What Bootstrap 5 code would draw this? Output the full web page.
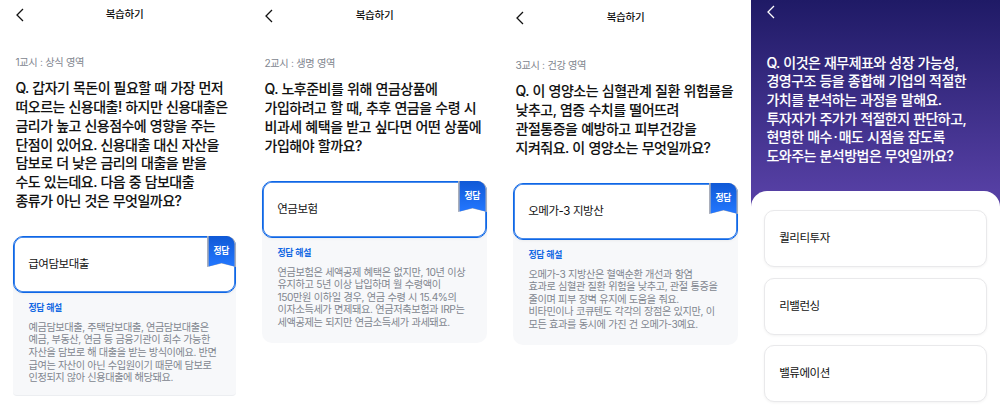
<!DOCTYPE html>
<html lang="ko">

<head>
    <meta charset="UTF-8">
    <meta name="viewport" content="width=device-width, initial-scale=1">
    <title>복습하기</title>
    <link href="https://cdn.jsdelivr.net/npm/bootstrap@5.3.0/dist/css/bootstrap.min.css" rel="stylesheet">
    <style>
        body {
            font-family: Inter, "Noto Sans CJK KR", sans-serif;
            color: #111;
            background: #fff;
            overflow: hidden;
        }

        .quiz-row {
            height: 409px;
        }

        .screen {
            padding: 3px 14px 0 13px;
            white-space: nowrap;
        }

        .screen-life {
            padding: 4px 13px 0 12px;
        }

        .screen-health {
            padding: 6px 12px 0 13px;
        }

        .screen-quiz {
            margin-left: 1px;
            padding: 0;
            background: linear-gradient(#1f1a66, #553fa3 190px);
            color: #fff;
        }

        .top-bar {
            display: grid;
            grid-template-columns: 20px 1fr 23px;
            align-items: center;
            height: 24px;
            padding-left: 3px;
            font-size: 10.6px;
            font-weight: 500;
            letter-spacing: -.35px;
            text-align: center;
        }

        .top-bar svg {
            display: block;
            width: 8px;
            height: 14px;
        }

        .area-name {
            margin: 27px 0 0 2.5px;
            line-height: 16px;
            font-size: 10.2px;
            letter-spacing: -.37px;
            word-spacing: .2px;
            color: #81868f;
        }

        .question {
            margin: 9.4px 0 25.6px 2.5px;
            font-size: 14px;
            line-height: 18.7px;
            font-weight: 500;
            letter-spacing: -.53px;
            word-spacing: .4px;
            -webkit-text-stroke: .08px currentColor;
        }

        .screen-life .question,
        .screen-health .question {
            letter-spacing: -.5px;
            word-spacing: .5px;
        }

        .choice {
            height: 57px;
            padding-left: 14.2px;
            border: 1px solid #e9e9eb;
            border-radius: 10px;
            background: #fff;
            color: #111;
            font-size: 11.5px;
            letter-spacing: -.46px;
            word-spacing: .3px;
            box-shadow: 0 1px 3px rgba(0, 0, 0, .05);
        }

        .choice-right {
            border-color: #0f67e6;
            box-shadow: inset 0 0 0 .8px #0f67e6, 0 1px 3px rgba(0, 0, 0, .05);
        }

        .ribbon {
            top: -1px;
            right: -1px;
            width: 29px;
            height: 32px;
        }

        .ribbon-label {
            top: 8px;
            right: 6px;
            font-size: 8.8px;
            line-height: 12px;
            font-weight: 700;
            letter-spacing: -.4px;
            color: #fff;
        }

        .answer-box {
            border-radius: 10px;
            background: #f7f8fa;
        }

        .answer-box-last {
            border-bottom: 1px solid #eceef1;
            border-radius: 10px 10px 4px 4px;
        }

        .explain {
            height: 102px;
            padding: 8px 0 0 15.5px;
            font-size: 10.2px;
            line-height: 12.55px;
            letter-spacing: -.43px;
            word-spacing: .15px;
            color: #81868f;
        }

        .screen-life .explain,
        .screen-health .explain {
            height: 105.5px;
            letter-spacing: -.4px;
            word-spacing: .3px;
        }

        .screen-health .explain {
            letter-spacing: -.43px;
        }

        .explain .explain-title {
            margin-bottom: 6px;
            line-height: 14px;
            font-size: 8.9px;
            font-weight: 700;
            letter-spacing: -.3px;
            color: #1268e3;
        }

        .screen-quiz .top-bar {
            padding-left: 16px;
        }

        .screen-quiz .question {
            margin: 29.6px 0 25.6px 15.5px;
        }

        .sheet {
            height: 218px;
            padding: 19px 13px 0;
            border-radius: 16px 16px 0 0;
            background: #fff;
        }

        .sheet .choice {
            margin-bottom: 10.3px;
        }

        .mid-dot {
            padding: 0 1.6px;
        }
    </style>
</head>

<body>

    <div class="row g-0 quiz-row">

        <!-- Common sense -->
        <div class="col-3">
            <div class="screen">
                <div class="top-bar">
                    <svg viewBox="0 0 8 14" fill="none" stroke="#111" stroke-width="1.3"><path d="M7 1 1 7l6 6" /></svg>
                    <span>복습하기</span>
                </div>
                <div class="area-name">1교시 : 상식 영역</div>
                <div class="question">
                    <div>Q. 갑자기 목돈이 필요할 때 가장 먼저</div>
                    <div>떠오르는 신용대출! 하지만 신용대출은</div>
                    <div>금리가 높고 신용점수에 영향을 주는</div>
                    <div>단점이 있어요. 신용대출 대신 자산을</div>
                    <div>담보로 더 낮은 금리의 대출을 받을</div>
                    <div>수도 있는데요. 다음 중 담보대출</div>
                    <div>종류가 아닌 것은 무엇일까요?</div>
                </div>
                <div class="answer-box answer-box-last">
                    <div class="choice choice-right position-relative d-flex align-items-center">
                        급여담보대출
                        <svg class="ribbon position-absolute" viewBox="0 0 29 32"><use href="#ribbonShape" /></svg>
                        <span class="ribbon-label position-absolute">정답</span>
                    </div>
                    <div class="explain">
                        <div class="explain-title">정답 해설</div>
                        <div>예금담보대출, 주택담보대출, 연금담보대출은</div>
                        <div>예금, 부동산, 연금 등 금융기관이 회수 가능한</div>
                        <div>자산을 담보로 해 대출을 받는 방식이에요. 반면</div>
                        <div>급여는 자산이 아닌 수입원이기 때문에 담보로</div>
                        <div>인정되지 않아 신용대출에 해당돼요.</div>
                    </div>
                </div>
            </div>
        </div>

        <!-- Life -->
        <div class="col-3">
            <div class="screen screen-life">
                <div class="top-bar">
                    <svg viewBox="0 0 8 14" fill="none" stroke="#111" stroke-width="1.3"><path d="M7 1 1 7l6 6" /></svg>
                    <span>복습하기</span>
                </div>
                <div class="area-name">2교시 : 생명 영역</div>
                <div class="question">
                    <div>Q. 노후준비를 위해 연금상품에</div>
                    <div>가입하려고 할 때, 추후 연금을 수령 시</div>
                    <div>비과세 혜택을 받고 싶다면 어떤 상품에</div>
                    <div>가입해야 할까요?</div>
                </div>
                <div class="answer-box">
                    <div class="choice choice-right position-relative d-flex align-items-center">
                        연금보험
                        <svg class="ribbon position-absolute" viewBox="0 0 29 32"><use href="#ribbonShape" /></svg>
                        <span class="ribbon-label position-absolute">정답</span>
                    </div>
                    <div class="explain">
                        <div class="explain-title">정답 해설</div>
                        <div>연금보험은 세액공제 혜택은 없지만, 10년 이상</div>
                        <div>유지하고 5년 이상 납입하며 월 수령액이</div>
                        <div>150만원 이하일 경우, 연금 수령 시 15.4%의</div>
                        <div>이자소득세가 면제돼요. 연금저축보험과 IRP는</div>
                        <div>세액공제는 되지만 연금소득세가 과세돼요.</div>
                    </div>
                </div>
            </div>
        </div>

        <!-- Health -->
        <div class="col-3">
            <div class="screen screen-health">
                <div class="top-bar">
                    <svg viewBox="0 0 8 14" fill="none" stroke="#111" stroke-width="1.3"><path d="M7 1 1 7l6 6" /></svg>
                    <span>복습하기</span>
                </div>
                <div class="area-name">3교시 : 건강 영역</div>
                <div class="question">
                    <div>Q. 이 영양소는 심혈관계 질환 위험률을</div>
                    <div>낮추고, 염증 수치를 떨어뜨려</div>
                    <div>관절통증을 예방하고 피부건강을</div>
                    <div>지켜줘요. 이 영양소는 무엇일까요?</div>
                </div>
                <div class="answer-box">
                    <div class="choice choice-right position-relative d-flex align-items-center">
                        오메가-3 지방산
                        <svg class="ribbon position-absolute" viewBox="0 0 29 32"><use href="#ribbonShape" /></svg>
                        <span class="ribbon-label position-absolute">정답</span>
                    </div>
                    <div class="explain">
                        <div class="explain-title">정답 해설</div>
                        <div>오메가-3 지방산은 혈액순환 개선과 항염</div>
                        <div>효과로 심혈관 질환 위험을 낮추고, 관절 통증을</div>
                        <div>줄이며 피부 장벽 유지에 도움을 줘요.</div>
                        <div>비타민이나 코큐텐도 각각의 장점은 있지만, 이</div>
                        <div>모든 효과를 동시에 가진 건 오메가-3예요.</div>
                    </div>
                </div>
            </div>
        </div>

        <!-- Open question -->
        <div class="col-3">
            <div class="screen screen-quiz">
                <div class="top-bar">
                    <svg viewBox="0 0 8 14" fill="none" stroke="#fff" stroke-width="1.3"><path d="M7 1 1 7l6 6" /></svg>
                </div>
                <div class="question">
                    <div>Q. 이것은 재무제표와 성장 가능성,</div>
                    <div>경영구조 등을 종합해 기업의 적절한</div>
                    <div>가치를 분석하는 과정을 말해요.</div>
                    <div>투자자가 주가가 적절한지 판단하고,</div>
                    <div>현명한 매수<span class="mid-dot">·</span>매도 시점을 잡도록</div>
                    <div>도와주는 분석방법은 무엇일까요?</div>
                </div>
                <div class="sheet">
                    <div class="choice d-flex align-items-center">퀄리티투자</div>
                    <div class="choice d-flex align-items-center">리밸런싱</div>
                    <div class="choice d-flex align-items-center">밸류에이션</div>
                </div>
            </div>
        </div>
    </div>

    <!-- Shared ribbon -->
    <svg width="0" height="0" class="d-block">
        <defs>
            <linearGradient id="ribbonBlue" x1="0" y1="0" x2="0" y2="1">
                <stop offset="0" stop-color="#1059d6" />
                <stop offset="1" stop-color="#2377ff" />
            </linearGradient>
            <g id="ribbonShape">
                <path d="M0 0H20Q28 1 29 9V31L14.5 27.500 0 31Z" fill="#a9aebb" />
                <path d="M1.700 0H20Q26.500 1 27.500 8V30.500L14.500 27 1.700 30.500Z" fill="url(#ribbonBlue)" />
            </g>
        </defs>
    </svg>

    <script src="https://cdn.jsdelivr.net/npm/bootstrap@5.3.0/dist/js/bootstrap.bundle.min.js"></script>
</body>

</html>
